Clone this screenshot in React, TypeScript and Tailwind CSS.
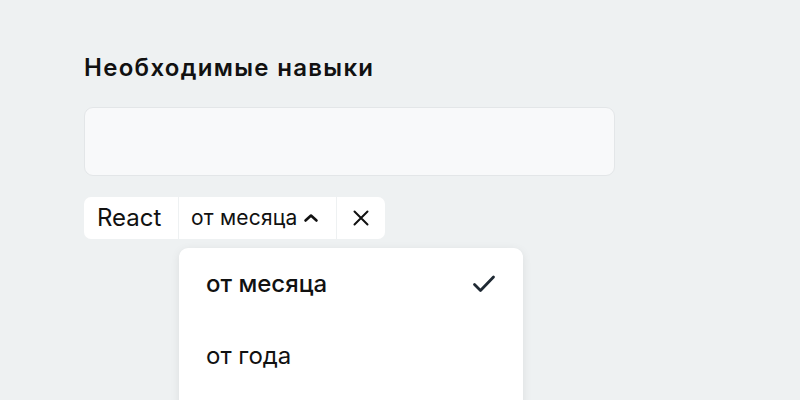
import React from 'react';

const Chevron: React.FC = () => (
  <svg width="18" height="14" viewBox="0 0 18 14" fill="none" className="ml-[5px]">
    <path d="M3.5 9.5 9 4.5l5.5 5" stroke="#111" strokeWidth="2.6" strokeLinecap="round" strokeLinejoin="round" />
  </svg>
);

const Cross: React.FC = () => (
  <svg width="18" height="18" viewBox="0 0 18 18" fill="none">
    <path d="M2.5 2.5l13 13M15.5 2.5l-13 13" stroke="#111" strokeWidth="2" strokeLinecap="round" />
  </svg>
);

const Check: React.FC = () => (
  <svg width="24" height="20" viewBox="0 0 24 20" fill="none">
    <path d="M2.5 10.5 8.5 16.5 21.5 3" stroke="#1f2933" strokeWidth="2.8" strokeLinecap="round" strokeLinejoin="round" />
  </svg>
);

const App: React.FC = () => {
  return (
    <div className="w-[800px] h-[400px] overflow-hidden bg-[#eef1f2] font-['Inter',sans-serif] text-[#111]">
      <div className="pl-[84px] pt-[52px]">
        <h2 className="text-[24px] leading-[32px] font-semibold tracking-[1.3px]">Необходимые навыки</h2>
        <div className="mt-[23px] w-[531px] h-[69px] rounded-[9px] bg-[#f8f9fa] border border-[#e3e6e8]" />
        <div className="mt-[21px] flex h-[42px] w-max">
          <div className="flex items-center w-[94px] pl-[13px] bg-white rounded-l-[7px] text-[24px]">React</div>
          <div className="flex items-center ml-px pl-[12px] pr-[16px] bg-white text-[21px] tracking-[0.2px]">
            от месяца
            <Chevron />
          </div>
          <div className="flex items-center justify-center ml-px w-[48px] bg-white rounded-r-[7px]">
            <Cross />
          </div>
        </div>
        <div className="mt-[9px] ml-[95px] w-[344px] h-[200px] bg-white rounded-[9px] shadow-[0_2px_10px_rgba(0,0,0,0.08)]">
          <div className="flex items-center justify-between h-[72px] pl-[27px] pr-[27px] text-[24px] font-medium">
            <span>от месяца</span>
            <Check />
          </div>
          <div className="flex items-center h-[72px] pl-[27px] text-[24px]">
            от года
          </div>
        </div>
      </div>
    </div>
  );
};

export default App;
